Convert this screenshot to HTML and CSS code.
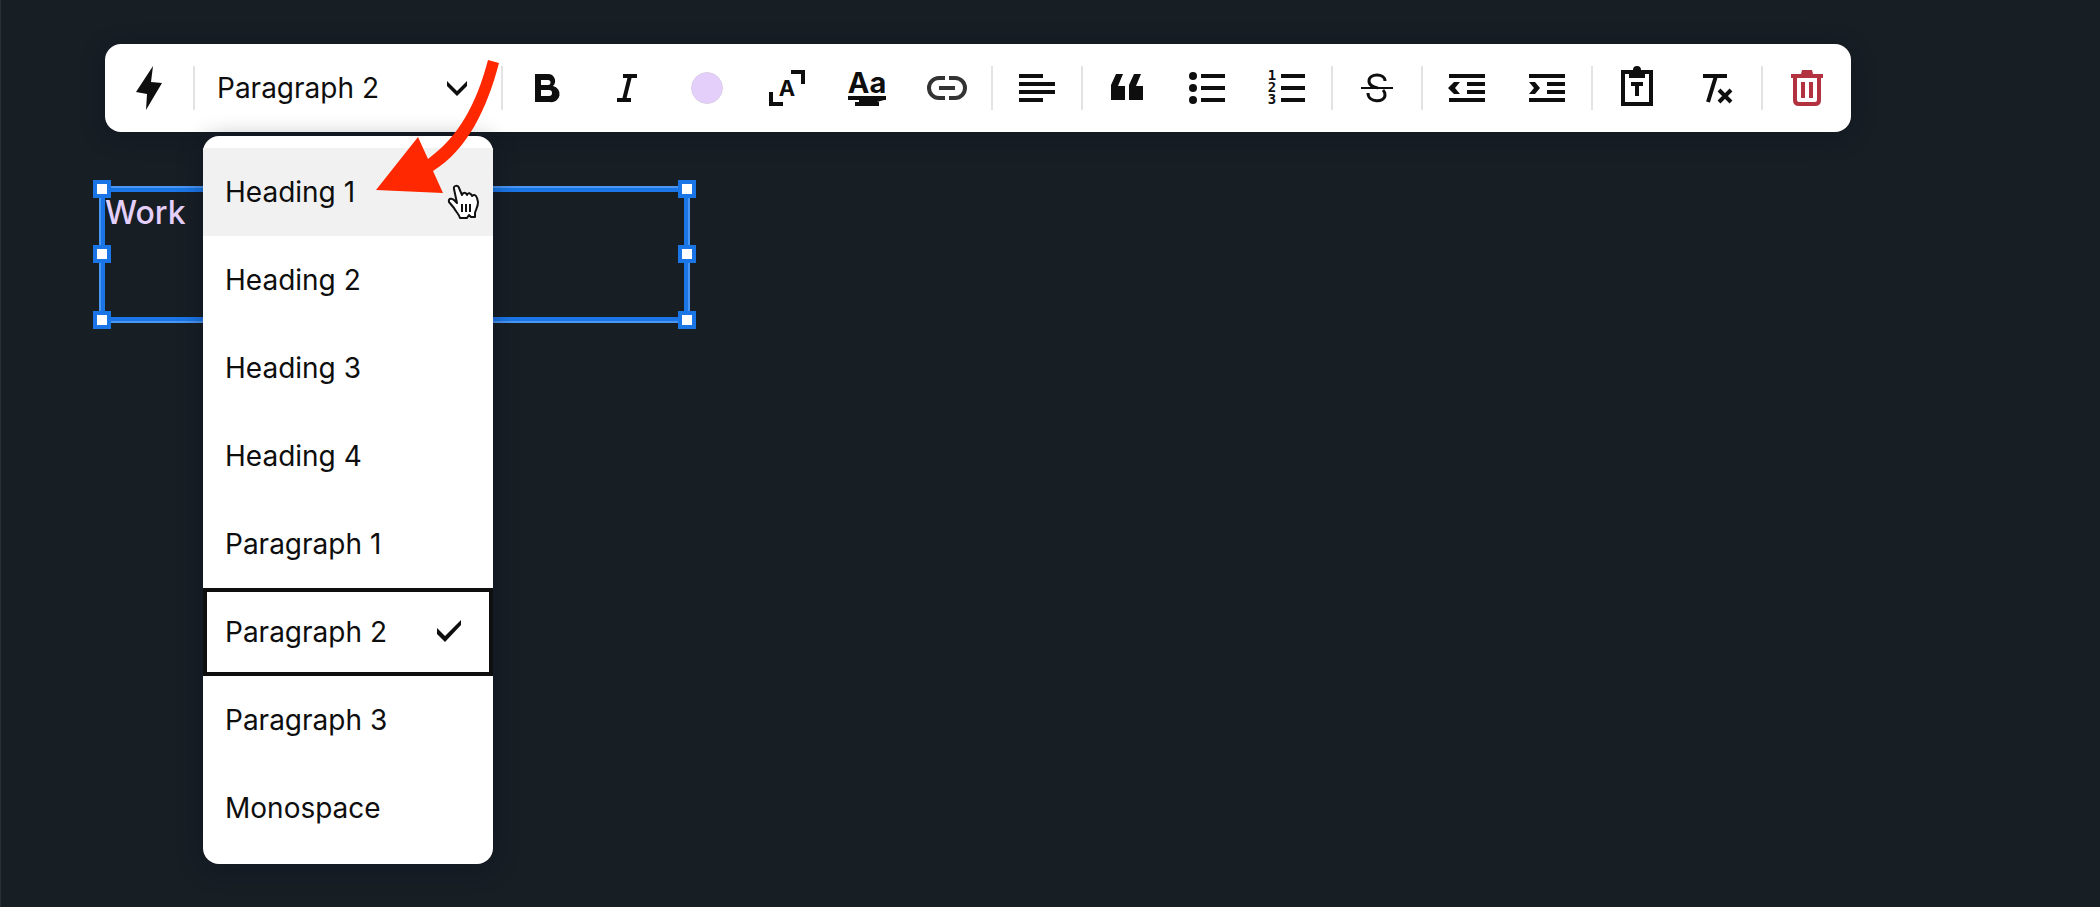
FILE: index.html
```html
<!DOCTYPE html>
<html lang="en">
<head>
<meta charset="utf-8">
<title>Text editor</title>
<link rel="stylesheet" href="styles.css">
</head>
<body>
<main class="canvas">
  <div class="toolbar" role="toolbar" aria-label="Text formatting">
    <button class="tool" aria-label="Quick actions"><svg class="icon" viewBox="0 0 44 44"><path d="M26 0 24 16 35 17 19 44 20 28 9 26Z"/></svg></button>
    <span class="divider"></span>
    <div class="style-picker">
      <select class="style-select" aria-label="Text style">
        <option>Paragraph 2</option>
      </select>
      <svg class="icon chevron" viewBox="0 0 44 44"><path d="M12 15 22 25 32 15V20L22 30 12 20Z"/></svg>
      <div class="menu" role="listbox" aria-label="Text styles">
        <button class="option option-hover" role="option">Heading 1</button>
        <button class="option" role="option">Heading 2</button>
        <button class="option" role="option">Heading 3</button>
        <button class="option" role="option">Heading 4</button>
        <button class="option" role="option">Paragraph 1</button>
        <button class="option option-selected" role="option" aria-selected="true">Paragraph 2<svg class="icon" viewBox="0 0 44 44"><path d="M10 18 18 26 34 10V15L18 32 10 24Z"/></svg></button>
        <button class="option" role="option">Paragraph 3</button>
        <button class="option" role="option">Monospace</button>
      </div>
    </div>
    <span class="divider"></span>
    <button class="tool" aria-label="Bold"><svg class="icon" viewBox="0 0 44 44"><path fill-rule="evenodd" d="M10 8H23A7 7 0 0 1 28 20A8 8 0 0 1 25 36H10ZM16 14V19H23A2 2 0 0 0 23 14ZM16 24V30H24A3 3 0 0 0 24 24Z"/></svg></button>
    <button class="tool" aria-label="Italic"><svg class="icon" viewBox="0 0 44 44"><path class="line" d="M18 10H32M12 34H26M25 10 19 34"/></svg></button>
    <button class="tool" aria-label="Text color"><span class="swatch"></span></button>
    <button class="tool" aria-label="Text size"><svg class="icon" viewBox="0 0 44 44"><path class="line" d="M26 6H38V18M6 26V38H18"/><text class="glyph glyph-size" x="22" y="30">A</text></svg></button>
    <button class="tool" aria-label="Font"><svg class="icon" viewBox="0 0 44 44"><text class="glyph glyph-font" x="22" y="27">Aa</text><path d="M3 30H41V34H39L32 36H34V40H10V36H14V34H3Z"/></svg></button>
    <button class="tool" aria-label="Link"><svg class="icon icon-soft" viewBox="0 0 44 44"><path class="line" d="M20 12H14A10 10 0 0 0 14 32H20M24 12H30A10 10 0 0 1 30 32H24M14 22H30"/></svg></button>
    <span class="divider"></span>
    <button class="tool" aria-label="Align left"><svg class="icon" viewBox="0 0 44 44"><path class="line" d="M4 10H28M4 18H40M4 26H40M4 34H28"/></svg></button>
    <span class="divider"></span>
    <button class="tool" aria-label="Quote"><svg class="icon" viewBox="0 0 44 44"><path d="M11 8H18L13 20H20V34H6V19ZM29 8H36L31 20H38V34H24V19Z"/></svg></button>
    <button class="tool" aria-label="Bulleted list"><svg class="icon" viewBox="0 0 44 44"><circle cx="8" cy="10" r="4"/><circle cx="8" cy="22" r="4"/><circle cx="8" cy="34" r="4"/><path class="line" d="M16 10H40M16 22H40M16 34H40"/></svg></button>
    <button class="tool" aria-label="Numbered list"><svg class="icon" viewBox="0 0 44 44"><text class="glyph glyph-number" x="7" y="14">1</text><text class="glyph glyph-number" x="7" y="26">2</text><text class="glyph glyph-number" x="7" y="38">3</text><path class="line" d="M16 10H40M16 22H40M16 34H40"/></svg></button>
    <span class="divider"></span>
    <button class="tool" aria-label="Strikethrough"><svg class="icon" viewBox="0 0 44 44"><path class="line line-thin" d="M30 15C30 7 14 7 14 15C14 20 19 21 23 22M13 27C13 37 30 37 30 29C30 27 29 25 28 24"/><path d="M6 21H38V23H6Z"/></svg></button>
    <span class="divider"></span>
    <button class="tool" aria-label="Decrease indent"><svg class="icon" viewBox="0 0 44 44"><path class="line" d="M4 10H40M22 18H40M22 26H40M4 34H40"/><path d="M9 16H15L10 22 15 28H9L3 22Z"/></svg></button>
    <button class="tool" aria-label="Increase indent"><svg class="icon" viewBox="0 0 44 44"><path class="line" d="M4 10H40M22 18H40M22 26H40M4 34H40"/><path d="M4 16H10L15 22 10 28H4L9 22Z"/></svg></button>
    <span class="divider"></span>
    <button class="tool" aria-label="Paste as text"><svg class="icon" viewBox="0 0 44 44"><path class="line" d="M8 6H36V38H8ZM16 18H28M22 18V30"/><path d="M14 4H18A4 4 0 0 1 26 4H30V12H14Z"/></svg></button>
    <button class="tool" aria-label="Clear formatting"><svg class="icon" viewBox="0 0 44 44"><path class="line" d="M8 10H32M21 10 13 36M24 24 36 36M36 24 24 36"/></svg></button>
    <span class="divider"></span>
    <button class="tool" aria-label="Delete"><svg class="icon icon-danger" viewBox="0 0 44 44"><path class="line" d="M6 10H38M10 10V34Q10 38 14 38H30Q34 38 34 34V10M18 16V32M26 16V32"/><path d="M16 8 17 4H27L28 8Z"/></svg></button>
  </div>

  <section class="text-block">
    <p class="text-content">Work</p>
    <span class="handle top left"></span>
    <span class="handle top right"></span>
    <span class="handle middle left"></span>
    <span class="handle middle right"></span>
    <span class="handle bottom left"></span>
    <span class="handle bottom right"></span>
  </section>

  <svg class="arrow" viewBox="0 0 126 136" aria-hidden="true"><path d="M114 1 125 4C113 50 93 91 59 112L69 134 2 131 44 78 54 100C85 77 102 46 114 1Z"/></svg>
  <svg class="pointer" viewBox="0 0 34 38" aria-hidden="true"><path class="pointer-hand" d="M8 5C7 1 12 1 13 4L16 11C17 8 20 8 21 11C22 8 25 9 26 12C28 10 30 11 31 14L32 18C32 23 30 25 29 29V33H25L23 31 21 34H14C13 30 10 28 8 24L3 18C2 14 6 14 8 16L11 19Z"/><path class="pointer-lines" d="M16 20V28M20 20V28M24 20V28"/></svg>
</main>
</body>
</html>
```

FILE: styles.css
```css
* {
  box-sizing: border-box;
}

body {
  margin: 0;
  background: #171e24;
  color: #0e0e0e;
  font-family: Inter, "Liberation Sans", sans-serif;
  font-size: 28px;
  line-height: 36px;
}

.canvas {
  position: relative;
  min-height: 100vh;
  padding: 44px 99px;
  border-left: 1px solid #282f35;
}

button,
select {
  margin: 0;
  border: 0;
  border-radius: 0;
  background: none;
  color: inherit;
  font: inherit;
}

.toolbar {
  display: flex;
  align-items: center;
  width: max-content;
  height: 88px;
  margin-left: 5px;
  padding: 0 4px;
  border-radius: 16px;
  background: #fff;
  box-shadow: 0 4px 24px rgba(10, 14, 28, 0.3);
}

.tool {
  display: flex;
  align-items: center;
  justify-content: center;
  width: 80px;
  height: 80px;
  padding: 0;
}

.divider {
  width: 2px;
  height: 44px;
  margin: 0 4px;
  background: #e3e3e3;
}

.icon {
  display: block;
  flex: none;
  width: 44px;
  height: 44px;
  overflow: visible;
  fill: currentColor;
}

.icon-soft {
  color: #333;
}

.icon-danger {
  color: #b3323f;
}

.line {
  fill: none;
  stroke: currentColor;
  stroke-width: 4px;
}

.line-thin {
  stroke-width: 3px;
}

.glyph {
  font-weight: 700;
  text-anchor: middle;
}

.glyph-size {
  font-size: 22px;
}

.glyph-font {
  font-size: 29px;
}

.glyph-number {
  font-family: "DejaVu Sans Mono", monospace;
  font-size: 14px;
}

.swatch {
  width: 32px;
  height: 32px;
  border: 1px solid #dccfe9;
  border-radius: 50%;
  background: #e4cffb;
}

.style-picker {
  position: relative;
  display: flex;
  align-items: center;
  width: 298px;
  height: 88px;
}

.style-select {
  appearance: none;
  width: 100%;
  height: 80px;
  padding: 0 60px 0 18px;
}

.chevron {
  position: absolute;
  right: 18px;
  pointer-events: none;
}

.menu {
  position: absolute;
  z-index: 2;
  top: calc(100% + 4px);
  left: 4px;
  width: 290px;
  padding: 12px 0;
  border-radius: 16px;
  background: #fff;
  box-shadow: 0 4px 24px rgba(16, 14, 34, 0.4);
}

.option {
  display: flex;
  align-items: center;
  justify-content: space-between;
  width: 100%;
  height: 88px;
  padding: 0 22px;
  text-align: left;
}

.option-hover {
  background: #f1f1f1;
}

.option-selected {
  padding: 0 18px;
  border: 4px solid #0e0e0e;
}

.text-block {
  position: relative;
  width: 591px;
  height: 137px;
  margin-top: 54px;
  margin-left: -1px;
  border: 2px solid #4996f3;
  outline: 4px solid #1a76e6;
  outline-offset: -6px;
}

.text-content {
  margin: 0;
  padding: 7px 4px;
  color: #e4d0fa;
  font-size: 32px;
  font-weight: 500;
}

.handle {
  position: absolute;
  width: 18px;
  height: 18px;
  border: 4px solid #1a76e6;
  background: #fff;
}

.top {
  top: -8px;
}

.middle {
  top: 57px;
}

.bottom {
  bottom: -8px;
}

.left {
  left: -8px;
}

.right {
  right: -8px;
}

.arrow {
  position: absolute;
  z-index: 3;
  top: 59px;
  left: 373px;
  width: 126px;
  height: 136px;
  fill: #ff2800;
}

.pointer {
  position: absolute;
  z-index: 3;
  top: 184px;
  left: 445px;
  width: 34px;
  height: 38px;
}

.pointer-hand {
  fill: #fff;
  stroke: #111;
  stroke-width: 2px;
  stroke-linejoin: round;
}

.pointer-lines {
  fill: none;
  stroke: #111;
  stroke-width: 2px;
}
```
